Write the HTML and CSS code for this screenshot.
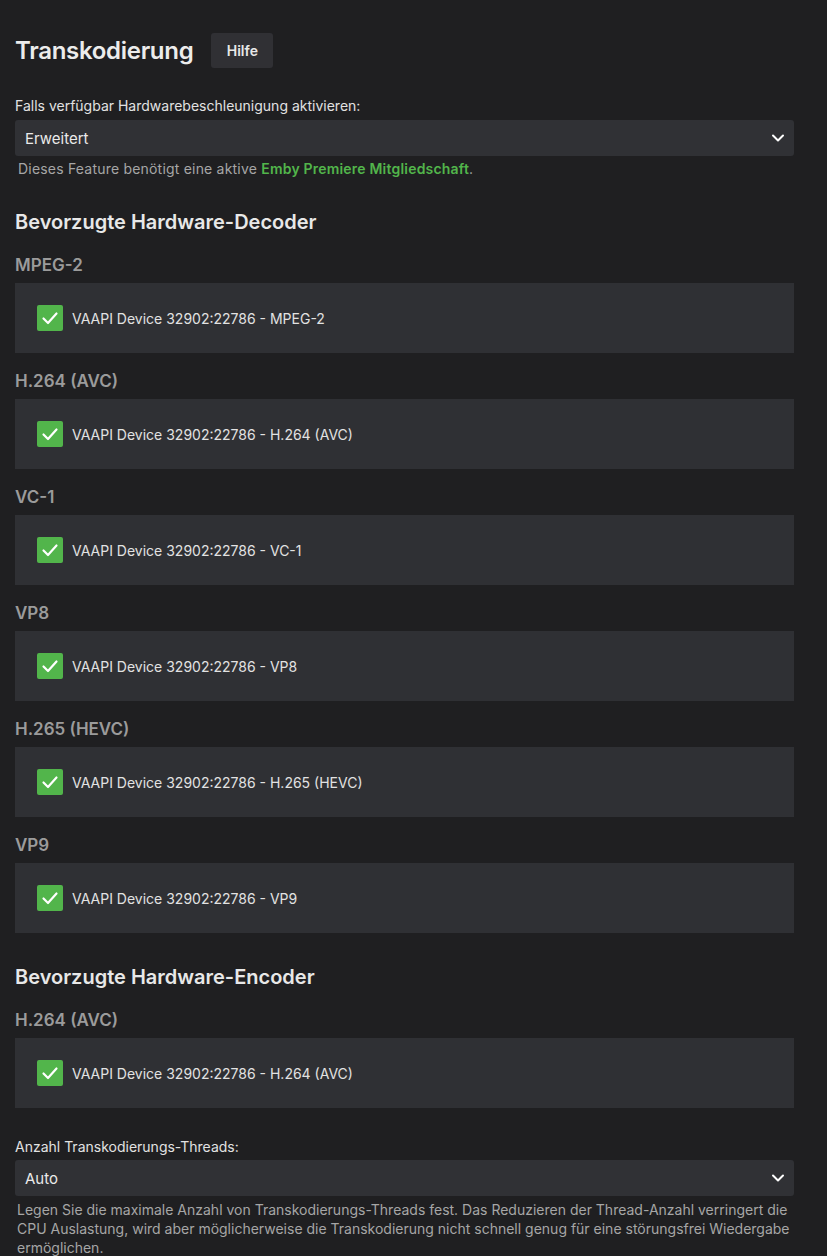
FILE: index.html
```html
<!DOCTYPE html>
<html lang="de">
<head>
    <meta charset="UTF-8">
    <meta name="viewport" content="width=device-width, initial-scale=1.0">
    <title>Transkodierung</title>
    <link rel="stylesheet" href="styles.css">
</head>
<body>
    <div class="page">
        <div class="page-header">
            <h1 class="page-title">Transkodierung</h1>
            <button class="help-btn">Hilfe</button>
        </div>

        <!-- Hardwarebeschleunigung -->
        <div class="field field-first">
            <label class="field-label">Falls verfügbar Hardwarebeschleunigung aktivieren:</label>
            <div class="select">
                <span>Erweitert</span>
                <svg class="chevron" width="14" height="14" viewBox="0 0 14 14"><path d="M2 4.5 L7 9.5 L12 4.5" fill="none" stroke="#fff" stroke-width="2" stroke-linecap="round" stroke-linejoin="round"/></svg>
            </div>
            <div class="field-note">Dieses Feature benötigt eine aktive <a class="premiere" href="#">Emby Premiere Mitgliedschaft</a>.</div>
        </div>

        <h2 class="section-title">Bevorzugte Hardware-Decoder</h2>

        <h3 class="codec-title">MPEG-2</h3>
        <div class="codec-box">
            <span class="check"><svg width="18" height="18" viewBox="0 0 18 18"><path d="M2.5 9.5 L7 14 L15.5 4.5" fill="none" stroke="#fff" stroke-width="2.2" stroke-linecap="round" stroke-linejoin="round"/></svg></span>
            <span>VAAPI Device 32902:22786 - MPEG-2</span>
        </div>

        <h3 class="codec-title">H.264 (AVC)</h3>
        <div class="codec-box">
            <span class="check"><svg width="18" height="18" viewBox="0 0 18 18"><path d="M2.5 9.5 L7 14 L15.5 4.5" fill="none" stroke="#fff" stroke-width="2.2" stroke-linecap="round" stroke-linejoin="round"/></svg></span>
            <span>VAAPI Device 32902:22786 - H.264 (AVC)</span>
        </div>

        <h3 class="codec-title">VC-1</h3>
        <div class="codec-box">
            <span class="check"><svg width="18" height="18" viewBox="0 0 18 18"><path d="M2.5 9.5 L7 14 L15.5 4.5" fill="none" stroke="#fff" stroke-width="2.2" stroke-linecap="round" stroke-linejoin="round"/></svg></span>
            <span>VAAPI Device 32902:22786 - VC-1</span>
        </div>

        <h3 class="codec-title">VP8</h3>
        <div class="codec-box">
            <span class="check"><svg width="18" height="18" viewBox="0 0 18 18"><path d="M2.5 9.5 L7 14 L15.5 4.5" fill="none" stroke="#fff" stroke-width="2.2" stroke-linecap="round" stroke-linejoin="round"/></svg></span>
            <span>VAAPI Device 32902:22786 - VP8</span>
        </div>

        <h3 class="codec-title">H.265 (HEVC)</h3>
        <div class="codec-box">
            <span class="check"><svg width="18" height="18" viewBox="0 0 18 18"><path d="M2.5 9.5 L7 14 L15.5 4.5" fill="none" stroke="#fff" stroke-width="2.2" stroke-linecap="round" stroke-linejoin="round"/></svg></span>
            <span>VAAPI Device 32902:22786 - H.265 (HEVC)</span>
        </div>

        <h3 class="codec-title">VP9</h3>
        <div class="codec-box">
            <span class="check"><svg width="18" height="18" viewBox="0 0 18 18"><path d="M2.5 9.5 L7 14 L15.5 4.5" fill="none" stroke="#fff" stroke-width="2.2" stroke-linecap="round" stroke-linejoin="round"/></svg></span>
            <span>VAAPI Device 32902:22786 - VP9</span>
        </div>

        <h2 class="section-title section-encoder">Bevorzugte Hardware-Encoder</h2>

        <h3 class="codec-title">H.264 (AVC)</h3>
        <div class="codec-box">
            <span class="check"><svg width="18" height="18" viewBox="0 0 18 18"><path d="M2.5 9.5 L7 14 L15.5 4.5" fill="none" stroke="#fff" stroke-width="2.2" stroke-linecap="round" stroke-linejoin="round"/></svg></span>
            <span>VAAPI Device 32902:22786 - H.264 (AVC)</span>
        </div>

        <!-- Threads -->
        <div class="field field-threads">
            <label class="field-label">Anzahl Transkodierungs-Threads:</label>
            <div class="select">
                <span>Auto</span>
                <svg class="chevron" width="14" height="14" viewBox="0 0 14 14"><path d="M2 4.5 L7 9.5 L12 4.5" fill="none" stroke="#fff" stroke-width="2" stroke-linecap="round" stroke-linejoin="round"/></svg>
            </div>
            <div class="field-note field-note-long">Legen Sie die maximale Anzahl von Transkodierungs-Threads fest. Das Reduzieren der Thread-Anzahl verringert die CPU Auslastung, wird aber möglicherweise die Transkodierung nicht schnell genug für eine störungsfrei Wiedergabe ermöglichen.</div>
        </div>
    </div>
</body>
</html>
```

FILE: styles.css
```css
body {
    margin: 0;
    background: #1f1f21;
    color: #e6e6e6;
    font-family: Inter, "Noto Sans", sans-serif;
    font-size: 14px;
}
.page {
    padding: 33px 33px 0 15px;
    height: 1256px;
    overflow: hidden;
    box-sizing: border-box;
}
.page-header {
    display: flex;
    align-items: center;
    gap: 18px;
    height: 35px;
}
.page-title {
    margin: 0;
    font-size: 24px;
    font-weight: 600;
    color: #ececec;
    letter-spacing: -0.3px;
}
.help-btn {
    width: 62px;
    height: 35px;
    background: #303034;
    border: none;
    border-radius: 3px;
    color: #e8e8e8;
    font-family: inherit;
    font-size: 14px;
    font-weight: 600;
}
.field-first {
    margin-top: 28px;
}
.field-label {
    display: block;
    line-height: 20px;
    color: #e2e2e2;
    margin-bottom: 4px;
}
.select {
    display: flex;
    align-items: center;
    justify-content: space-between;
    height: 36px;
    padding: 0 9px 0 10px;
    background: #303135;
    border-radius: 3px;
    color: #eaeaea;
    font-size: 15px;
}
.chevron {
    display: block;
}
.field-note {
    margin-top: 3px;
    padding-left: 3px;
    line-height: 20px;
    color: #a6a6a6;
    font-size: 14px;
    letter-spacing: 0.2px;
}
.premiere {
    color: #52b54b;
    font-weight: 600;
    text-decoration: none;
}
.section-title {
    margin: 29px 0 0 0;
    font-size: 20px;
    line-height: 28px;
    font-weight: 600;
    color: #e8e8e8;
}
.section-encoder {
    margin-top: 30px;
}
.codec-title {
    margin: 16px 0 6px 0;
    font-size: 17px;
    line-height: 24px;
    font-weight: 600;
    color: #9b9b9b;
}
.section-title + .codec-title {
    margin-top: 17px;
}
.codec-box {
    display: flex;
    align-items: center;
    gap: 9px;
    height: 70px;
    padding-left: 22px;
    background: #2f3034;
    color: #e2e2e2;
    font-size: 14px;
}
.check {
    display: flex;
    align-items: center;
    justify-content: center;
    width: 26px;
    height: 26px;
    background: #52b54b;
    border-radius: 2px;
}
.field-threads {
    margin-top: 29px;
}
.field-threads .field-label {
    margin-bottom: 3px;
    font-size: 14px;
}
.field-note-long {
    margin-top: 4px;
    padding-left: 2px;
    line-height: 19px;
    font-size: 14px;
    letter-spacing: 0;
}
```
